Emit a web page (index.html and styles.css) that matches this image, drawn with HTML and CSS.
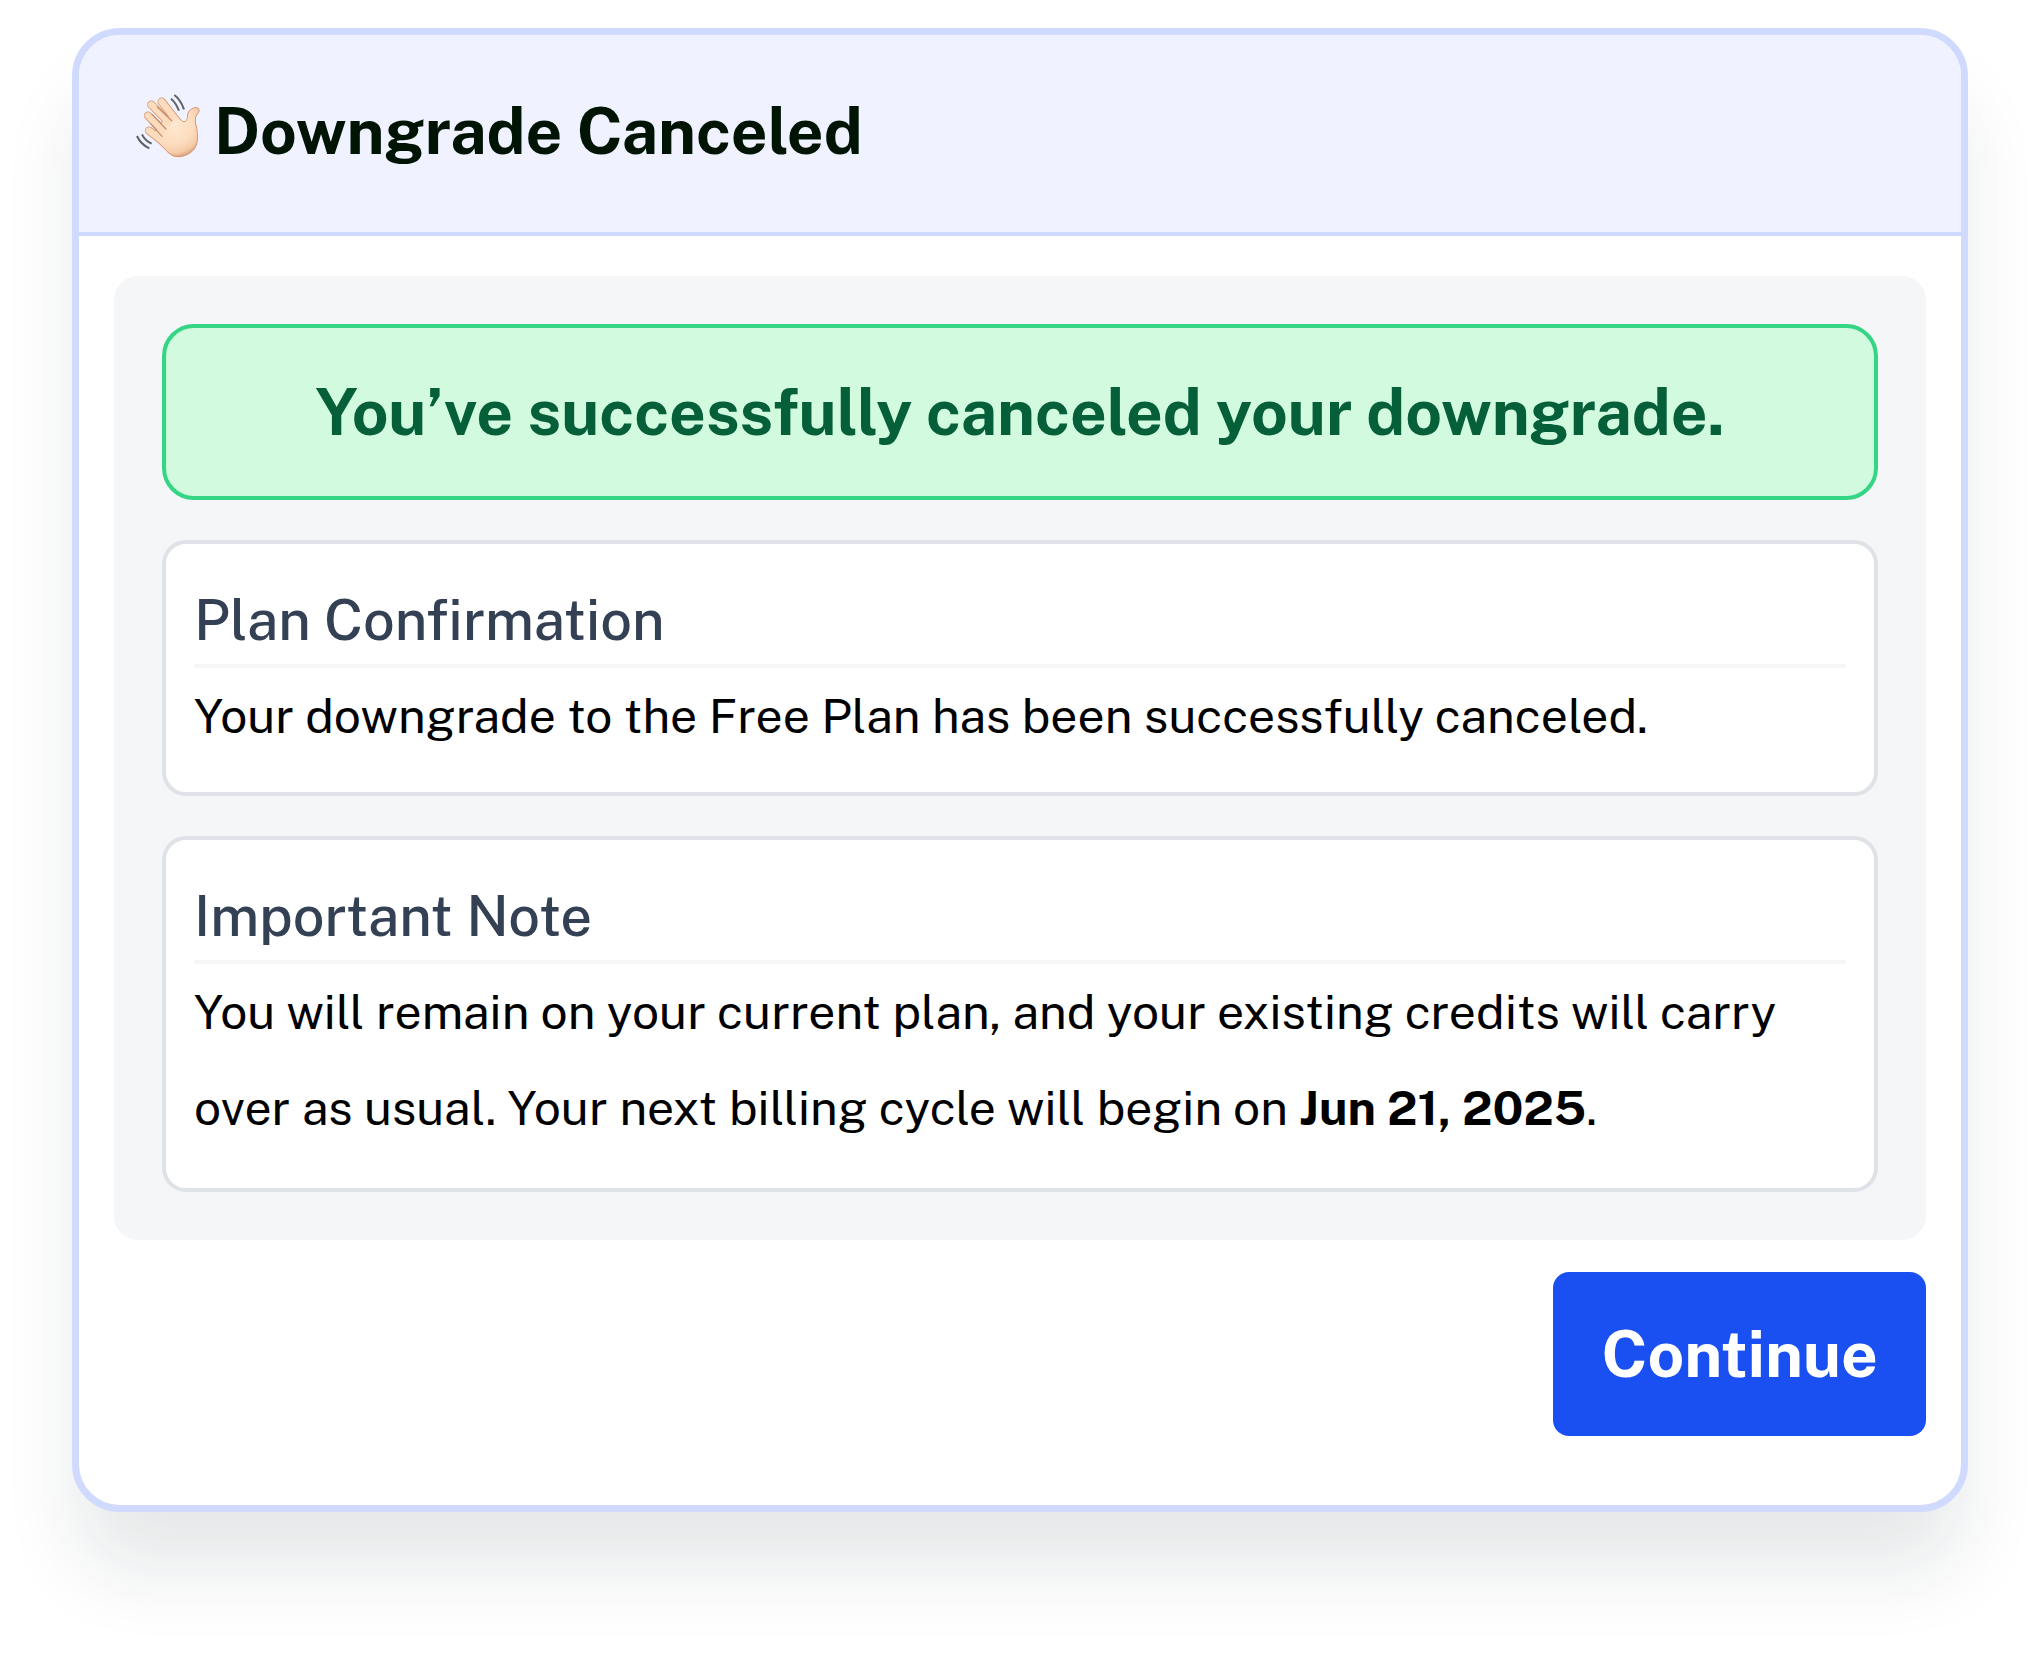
FILE: index.html
```html
<!DOCTYPE html>
<html lang="en">
<head>
  <meta charset="UTF-8">
  <meta name="viewport" content="width=device-width, initial-scale=1">
  <title>Downgrade Canceled</title>
  <link rel="stylesheet" href="styles.css">
</head>
<body>
  <main class="card">
    <header class="card-header">
      <!-- waving hand -->
      <svg class="wave" viewBox="45 40 195 195" aria-hidden="true">
        <defs>
          <radialGradient id="skin" gradientUnits="userSpaceOnUse" cx="160" cy="135" r="100">
            <stop offset="0" stop-color="#ffe8d0"/>
            <stop offset="0.6" stop-color="#fcdcbe"/>
            <stop offset="0.85" stop-color="#f5cba9"/>
            <stop offset="1" stop-color="#d99a75"/>
          </radialGradient>
        </defs>
        <g fill="none" stroke="#d79a74" stroke-width="25" stroke-linecap="round">
          <path d="M125 66L178 134"/>
          <path d="M94 75L160 142"/>
          <path d="M84 108L146 168"/>
          <path d="M87 153L140 194"/>
        </g>
        <path fill="url(#skin)" stroke="#d4956f" stroke-width="3" d="M188 125C200 130 202 118 203 106C204 93 215 84 228 84C237 84 240 92 235 99C227 109 224 116 227 132C232 151 235 173 230 193C223 217 198 231 174 231C155 231 146 220 134 208L96 169L130 120L160 100Z"/>
        <g fill="none" stroke="#fcdcbe" stroke-width="20" stroke-linecap="round">
          <path d="M125 66L180 137"/>
          <path d="M94 75L165 147"/>
          <path d="M84 108L151 173"/>
          <path d="M87 153L145 198"/>
        </g>
        <path fill="url(#skin)" d="M166 116L187 126C199 132 204 120 206 106C208 94 218 87 228 87C235 88 236 93 231 99C223 109 221 119 224 133C230 155 231 174 226 191C219 215 194 228 174 228C157 227 148 218 137 206L125 188L133 160L150 138Z"/>
        <g fill="none" stroke="#cb8f6a" stroke-width="4" stroke-linecap="round">
          <path d="M112 82L155 123"/>
          <path d="M96 104L138 148"/>
          <path d="M91 131L126 170"/>
        </g>
        <g fill="none" stroke="#5f6266" stroke-width="6">
          <path d="M163 46Q182 60 192 89"/>
          <path d="M153 57Q167 68 177 93"/>
          <path d="M66 164Q75 183 95 192"/>
          <path d="M51 169Q62 194 88 206"/>
        </g>
      </svg>
      <h1 class="card-title">Downgrade Canceled</h1>
    </header>

    <div class="card-body">
      <div class="panel">
        <p class="success">You’ve successfully canceled your downgrade.</p>

        <section class="info">
          <h2 class="info-title">Plan Confirmation</h2>
          <p class="info-text">Your downgrade to the Free Plan has been successfully canceled.</p>
        </section>

        <section class="info">
          <h2 class="info-title">Important Note</h2>
          <p class="info-text">You will remain on your current plan, and your existing credits will carry over as usual. Your next billing cycle will begin on <strong>Jun 21, 2025</strong>.</p>
        </section>
      </div>

      <div class="actions">
        <button type="button" class="continue">Continue</button>
      </div>
    </div>
  </main>
</body>
</html>
```
FILE: styles.css
```css
* {
  margin: 0;
  padding: 0;
  box-sizing: border-box;
}

body {
  padding: 28px 67px 140px 72px;
  background-color: #fff;
  color: #000;
  font-family: "Public Sans", Inter, sans-serif;
}

.card {
  border: 7px solid #cfdafe;
  border-radius: 48px;
  background-color: #fff;
  box-shadow: 0 64px 80px -8px rgba(16, 32, 48, 0.11);
}

.card-header {
  display: flex;
  align-items: center;
  gap: 14px;
  padding: 48px 56px 53px;
  border-bottom: 4px solid #cfdafe;
  border-radius: 41px 41px 0 0;
  background-color: #f0f3ff;
}

.wave {
  width: 65px;
  height: 65px;
  margin-bottom: 12px;
}

.card-title {
  color: #001405;
  font-size: 64px;
  font-weight: 700;
  line-height: 96px;
}

.card-body {
  padding: 40px 35px 69px;
}

.panel {
  display: flex;
  flex-direction: column;
  gap: 40px;
  padding: 48px;
  border-radius: 24px;
  background-color: #f4f6f8;
}

.success {
  padding: 36px 32px;
  border: 4px solid #34d685;
  border-radius: 32px;
  background-color: #d1fadf;
  color: #05603a;
  font-size: 64px;
  font-weight: 700;
  line-height: 96px;
  text-align: center;
}

.info {
  padding: 36px 28px 28px;
  border: 4px solid #dfe2e7;
  border-radius: 24px;
  background-color: #fff;
}

.info:last-child {
  padding-bottom: 32px;
}

.info-title {
  padding-bottom: 4px;
  border-bottom: 4px solid #f4f6f8;
  color: #344054;
  font-size: 56px;
  font-weight: 500;
  line-height: 80px;
}

.info-text {
  font-size: 48px;
  line-height: 96px;
}

.actions {
  display: flex;
  justify-content: flex-end;
  margin-top: 32px;
}

.continue {
  padding: 34px 48px;
  border: none;
  border-radius: 16px;
  background-color: #1a50f1;
  color: #fff;
  font-family: inherit;
  font-size: 64px;
  font-weight: 700;
  line-height: 96px;
  cursor: pointer;
}

.continue:hover {
  background-color: #1644d0;
}
```
